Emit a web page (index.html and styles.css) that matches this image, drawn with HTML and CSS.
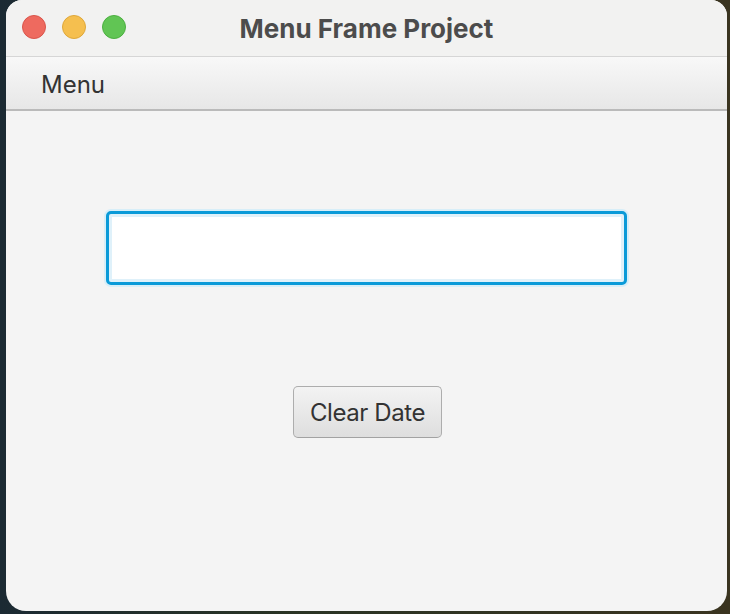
FILE: index.html
```html
<!DOCTYPE html>
<html>
<head>
<meta charset="utf-8">
<link rel="stylesheet" href="styles.css">
</head>
<body>
<div class="desktop">
  <div class="window">
    <div class="titlebar">
      <div class="lights">
        <span class="light red"></span>
        <span class="light yellow"></span>
        <span class="light green"></span>
      </div>
      <div class="title">Menu Frame Project</div>
    </div>
    <div class="menubar">
      <span class="menu-item">Menu</span>
    </div>
    <div class="content">
      <div class="field"></div>
      <button class="btn">Clear Date</button>
    </div>
  </div>
</div>
</body>
</html>
```

FILE: styles.css
```css
html, body {
  margin: 0;
  padding: 0;
  width: 730px;
  height: 614px;
  overflow: hidden;
}
.desktop {
  width: 730px;
  height: 614px;
  background: linear-gradient(90deg, #1b2a33 0%, #2a3424 40%, #3a3420 100%);
  padding: 0 3px 3px 6px;
  box-sizing: border-box;
  font-family: "Inter", "Liberation Sans", sans-serif;
}
.window {
  width: 721px;
  height: 611px;
  background: #f4f4f4;
  border-radius: 16px 16px 20px 20px;
  overflow: hidden;
  display: flex;
  flex-direction: column;
}
.titlebar {
  height: 56px;
  background: #f2f2f1;
  border-bottom: 1px solid #d6d6d6;
  position: relative;
  display: flex;
  align-items: center;
  justify-content: center;
  flex-shrink: 0;
}
.lights {
  position: absolute;
  left: 16px;
  top: 15px;
  display: flex;
  gap: 16px;
}
.light {
  width: 24px;
  height: 24px;
  border-radius: 50%;
  box-sizing: border-box;
}
.red { background: #ee6a5f; border: 1px solid #d9554b; }
.yellow { background: #f5bf4f; border: 1px solid #dea73a; }
.green { background: #61c554; border: 1px solid #4caf40; }
.title {
  font-weight: 700;
  font-size: 26px;
  color: #4c4c4c;
}
.menubar {
  height: 54px;
  box-sizing: border-box;
  background: linear-gradient(#f8f8f8, #e7e7e7);
  border-bottom: 2px solid #bababa;
  display: flex;
  align-items: center;
  padding-left: 35px;
  padding-top: 2px;
  flex-shrink: 0;
}
.menu-item {
  font-size: 24px;
  color: #333333;
}
.content {
  flex: 1;
  display: flex;
  flex-direction: column;
  align-items: center;
  padding-top: 100px;
}
.field {
  width: 521px;
  height: 74px;
  box-sizing: border-box;
  background: #ffffff;
  border: 3px solid #0a9ad8;
  border-radius: 5px;
  box-shadow: inset 0 0 0 3px #dff1fa, 0 0 0 2px #d7eef8;
}
.btn {
  margin-top: 101px;
  margin-left: 2px;
  width: 149px;
  height: 52px;
  box-sizing: border-box;
  border: 1px solid #adadad;
  border-bottom-color: #a2a2a2;
  border-radius: 5px;
  background: linear-gradient(#f3f3f3, #dedede);
  font-family: "Inter", "Liberation Sans", sans-serif;
  font-size: 24px;
  color: #333333;
  padding: 0;
  letter-spacing: -0.4px;
}
```
